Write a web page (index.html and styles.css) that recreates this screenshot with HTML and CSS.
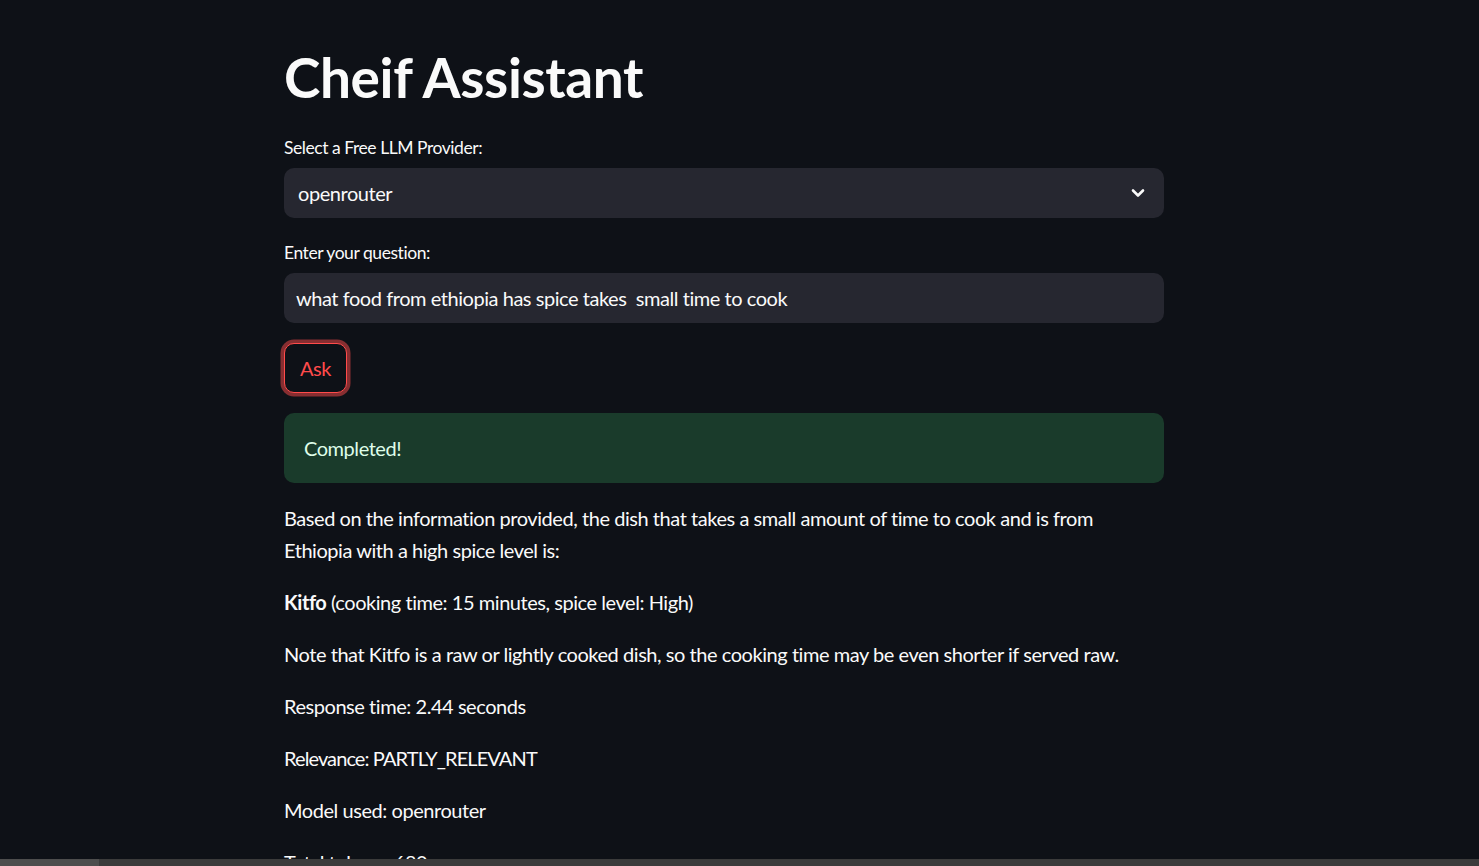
FILE: index.html
```html
<!DOCTYPE html>
<html lang="en">
<head>
<meta charset="utf-8">
<title>Cheif Assistant</title>
<link rel="stylesheet" href="styles.css">
</head>
<body>
<div class="app">
  <main class="block">
    <h1 class="title">Cheif Assistant</h1>

    <div class="field">
      <label class="label">Select a Free LLM Provider:</label>
      <div class="select">
        <span class="select-value">openrouter</span>
        <svg class="chevron" width="14" height="10" viewBox="0 0 14 10"><path d="M2 2.5 L7 7.5 L12 2.5" fill="none" stroke="#fafafa" stroke-width="2.6" stroke-linecap="round" stroke-linejoin="round"/></svg>
      </div>
    </div>

    <div class="field">
      <label class="label">Enter your question:</label>
      <div class="input">what food from ethiopia has spice takes&nbsp; small time to cook</div>
    </div>

    <div class="field">
      <button class="btn">Ask</button>
    </div>

    <div class="alert">Completed!</div>

    <div class="markdown">
      <p>Based on the information provided, the dish that takes a small amount of time to cook and is from Ethiopia with a high spice level is:</p>
      <p><strong>Kitfo</strong> (cooking time: 15 minutes, spice level: High)</p>
      <p>Note that Kitfo is a raw or lightly cooked dish, so the cooking time may be even shorter if served raw.</p>
    </div>
    <p class="line">Response time: 2.44 seconds</p>
    <p class="line caps">Relevance: PARTLY_RELEVANT</p>
    <p class="line">Model used: openrouter</p>
    <p class="line">Total tokens: 680</p>
  </main>
</div>
<div class="hscroll"><div class="thumb"></div></div>
</body>
</html>
```

FILE: styles.css
```css
html, body {
  margin: 0;
  padding: 0;
  background: #0e1117;
  height: 100%;
  overflow: hidden;
}
body {
  font-family: "Lato", "Liberation Sans", sans-serif;
  color: #fafafa;
}
.app {
  display: flex;
  padding-left: 284px;
}
.block {
  width: 880px;
  padding-top: 44px;
  display: flex;
  flex-direction: column;
}
.title {
  margin: 0 0 23px 0;
  font-size: 55px;
  line-height: 66px;
  font-weight: 700;
  letter-spacing: -0.4px;
}
.field {
  display: flex;
  flex-direction: column;
  margin-bottom: 20px;
}
.label {
  font-size: 17.5px;
  line-height: 30px;
  margin-bottom: 5px;
  letter-spacing: -0.45px;
}
.select {
  height: 50px;
  background: #262730;
  border-radius: 10px;
  display: flex;
  align-items: center;
  justify-content: space-between;
  padding: 0 19px 0 14px;
}
.select-value, .input {
  font-size: 20px;
  letter-spacing: -0.45px;
}
.chevron {
  display: block;
}
.input {
  height: 50px;
  background: #262730;
  border-radius: 10px;
  display: flex;
  align-items: center;
  padding: 0 12px;
  white-space: pre;
}
.btn {
  align-self: flex-start;
  width: 63px;
  height: 50px;
  background: #0e1117;
  border: 1px solid #ff4b4b;
  border-radius: 10px;
  box-shadow: 0 0 0 3.5px rgba(255, 75, 75, 0.5);
  color: #ff4b4b;
  font-family: inherit;
  font-size: 20px;
  letter-spacing: -0.45px;
  padding: 0;
}
.alert {
  height: 70px;
  background: #1a3b2b;
  border-radius: 10px;
  display: flex;
  align-items: center;
  padding: 0 20px;
  color: #dffde9;
  font-size: 20px;
  letter-spacing: -0.45px;
  margin-bottom: 19px;
}
.markdown p, .line {
  margin: 0 0 20px 0;
  font-size: 20px;
  line-height: 32px;
  letter-spacing: -0.45px;
}
.line.caps {
  letter-spacing: -0.9px;
}
.markdown strong {
  font-weight: 700;
}
.hscroll {
  position: fixed;
  left: 0;
  right: 0;
  bottom: 0;
  height: 7px;
  background: #3b3b3b;
}
.thumb {
  width: 99px;
  height: 100%;
  background: #4d4d4d;
}
```
